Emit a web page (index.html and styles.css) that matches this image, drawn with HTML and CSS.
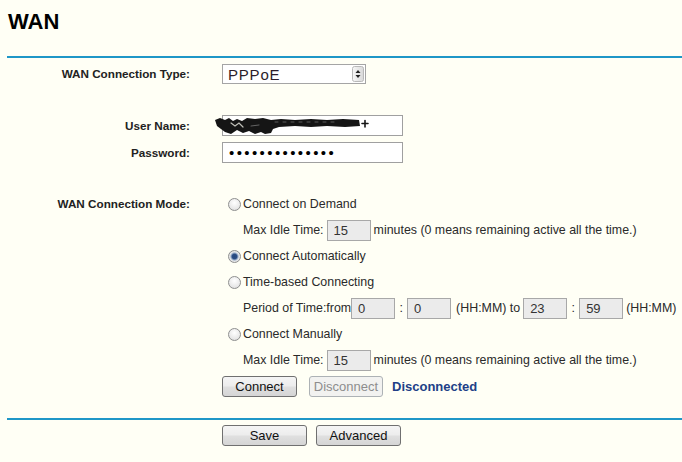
FILE: index.html
```html
<!DOCTYPE html>
<html lang="en">
<head>
    <meta charset="UTF-8">
    <title>WAN</title>
    <link rel="stylesheet" href="styles.css">
</head>
<body>

    <h1 class="page-title">WAN</h1>
    <hr class="rule">

    <form class="wan-form">
        <div class="field field-type">
            <label class="field-label" for="wanType">WAN Connection Type:</label>
            <select id="wanType" class="type-select">
                <option>PPPoE</option>
            </select>
        </div>

        <div class="field field-user">
            <label class="field-label" for="userName">User Name:</label>
            <div class="user-wrap">
                <input type="text" id="userName" class="text-input" value="">
                <!-- account name blacked out in the screenshot -->
                <svg class="scribble" width="154" height="19" viewBox="0 0 154 19">
                    <g fill="#151515">
                        <path d="M0 3 L5 1 L10 3 L14 1 L18 4 L22 2 L27 4 L32 1 L40 2 L48 1 L56 3 L66 2 L80 3 L96 2 L112 3 L128 2 L144 3 L145 9 L130 10 L112 9 L96 10 L80 9 L64 10 L58 12 L56 16 L50 17 L46 15 L40 17 L34 14 L28 16 L22 13 L16 17 L10 15 L6 12 L2 9 Z"/>
                    </g>
                    <g fill="none" stroke-linecap="round">
                        <path d="M16 6 L20 9 L24 6 L28 10" stroke="#e8e8e0" stroke-width="1.2" opacity="0.8"/>
                        <path d="M60 5 L120 5" stroke="#777" stroke-width="1" stroke-dasharray="3 5" opacity="0.7"/>
                        <path d="M36 9 L44 8" stroke="#999" stroke-width="1" opacity="0.6"/>
                        <path d="M147 6.5 L153 6.5 M150 3.5 L150 10" stroke="#151515" stroke-width="1.6"/>
                    </g>
                </svg>
            </div>
        </div>

        <div class="field field-pass">
            <label class="field-label" for="password">Password:</label>
            <input type="password" id="password" class="text-input pass-input" value="abcdefghijklmn">
        </div>

        <div class="field field-mode">
            <span class="field-label">WAN Connection Mode:</span>
            <div class="mode-list">
                <label class="mode-row">
                    <input type="radio" name="mode" class="mode-radio">Connect on Demand
                </label>
                <div class="mode-row mode-sub">
                    Max Idle Time:
                    <input type="text" class="short-input idle-input" value="15" disabled>
                    <span class="after-input">minutes (0 means remaining active all the time.)</span>
                </div>

                <label class="mode-row">
                    <input type="radio" name="mode" class="mode-radio" checked>Connect Automatically
                </label>

                <label class="mode-row">
                    <input type="radio" name="mode" class="mode-radio">Time-based Connecting
                </label>
                <div class="mode-row mode-sub">
                    Period of Time:from
                    <input type="text" class="short-input" value="0" disabled>
                    <span class="sep">:</span>
                    <input type="text" class="short-input" value="0" disabled>
                    <span class="after-input hhmm">(HH:MM) to</span>
                    <input type="text" class="short-input" value="23" disabled>
                    <span class="sep">:</span>
                    <input type="text" class="short-input" value="59" disabled>
                    <span class="after-input">(HH:MM)</span>
                </div>

                <label class="mode-row">
                    <input type="radio" name="mode" class="mode-radio">Connect Manually
                </label>
                <div class="mode-row mode-sub">
                    Max Idle Time:
                    <input type="text" class="short-input idle-input" value="15" disabled>
                    <span class="after-input">minutes (0 means remaining active all the time.)</span>
                </div>

                <div class="mode-row">
                    <button type="button" class="btn btn-connect">Connect</button>
                    <button type="button" class="btn btn-disconnect" disabled>Disconnect</button>
                    <span class="status">Disconnected</span>
                </div>
            </div>
        </div>
    </form>

    <hr class="rule rule-bottom">

    <div class="footer-actions">
        <button type="button" class="btn btn-wide">Save</button>
        <button type="button" class="btn btn-wide">Advanced</button>
    </div>

</body>
</html>
```

FILE: styles.css
```css
body {
    margin: 0;
    background-color: #fffff5;
    font-family: "Liberation Sans", Arial, sans-serif;
    font-size: 12px;
    color: #2a2a2a;
}
.page-title {
    margin: 0;
    padding: 9px 0 0 8px;
    font-size: 22px;
    line-height: 26px;
    font-weight: bold;
    color: #000;
}
.rule {
    height: 2px;
    border: 0;
    background-color: #1f97c7;
    margin: 21px 0 0 7px;
}
.rule-bottom {
    margin-top: 19px;
}
.wan-form {
    margin-top: 3px;
}
.field {
    display: flex;
    align-items: center;
}
.field-label {
    width: 190px;
    flex: none;
    margin-right: 32px;
    text-align: right;
    font-size: 11.7px;
    font-weight: bold;
    line-height: 26px;
    color: #222;
}
.field-type {
    height: 26px;
}
.field-user {
    margin-top: 25px;
    height: 27px;
}
.field-pass {
    height: 27px;
}
.field-mode {
    margin-top: 25px;
    align-items: flex-start;
}

/* select with the little up/down spinner */
.type-select {
    -webkit-appearance: none;
    appearance: none;
    box-sizing: border-box;
    width: 144px;
    height: 20px;
    margin: 0;
    padding: 0 0 0 5px;
    border: 1px solid #a5a5a5;
    border-radius: 0;
    background: #fff url("data:image/svg+xml,%3Csvg xmlns='http://www.w3.org/2000/svg' width='12' height='16'%3E%3Cdefs%3E%3ClinearGradient id='g' x1='0' x2='1'%3E%3Cstop offset='0' stop-color='%23f7f7f7'/%3E%3Cstop offset='1' stop-color='%23d9d9d9'/%3E%3C/linearGradient%3E%3C/defs%3E%3Crect x='0.5' y='0.5' width='11' height='15' rx='2' fill='url(%23g)' stroke='%23b9b9b9'/%3E%3Cpath d='M3.5 7h5l-2.5-3z M3.5 9h5l-2.5 3z' fill='%23222'/%3E%3C/svg%3E") no-repeat right 1px center;
    font-family: "Liberation Sans", Arial, sans-serif;
    font-size: 15px;
    letter-spacing: 0.8px;
    color: #2b1d2a;
}

.text-input {
    box-sizing: border-box;
    width: 181px;
    height: 21px;
    margin: 0;
    padding: 0 6px;
    border: 1px solid #a0a0a0;
    background-color: #fff;
    font-family: "Liberation Sans", Arial, sans-serif;
    font-size: 13px;
}
.pass-input {
    font-size: 15px;
    letter-spacing: 2.4px;
    color: #000;
}
.user-wrap {
    position: relative;
    display: flex;
}
.scribble {
    position: absolute;
    left: -7px;
    top: 2px;
}

.mode-list {
    display: flex;
    flex-direction: column;
    font-size: 12.4px;
}
.mode-row {
    height: 26px;
    display: flex;
    align-items: center;
    white-space: nowrap;
}
.mode-sub {
    padding-left: 21px;
}
.mode-radio {
    -webkit-appearance: none;
    appearance: none;
    box-sizing: border-box;
    width: 13px;
    height: 13px;
    margin: 0 2px 0 6px;
    border: 1px solid #8e8f8f;
    border-radius: 50%;
    background: radial-gradient(circle at 50% 35%, #ffffff, #e6e6e6 70%, #d2d2d2);
}
.mode-radio:checked {
    background: radial-gradient(circle, #24467c 0, #2d4f86 2.4px, #8ea3c2 3.4px, #e9e9e9 4.6px, #d4d4d4);
}
.short-input {
    box-sizing: border-box;
    width: 44px;
    height: 21px;
    margin: 0;
    padding: 0 0 0 6px;
    border: 1px solid #a8a8a8;
    background-color: #ebebeb;
    color: #333;
    font-family: "Liberation Sans", Arial, sans-serif;
    font-size: 13px;
}
.idle-input {
    margin-left: 3px;
}
.sep {
    width: 12px;
    text-align: center;
}
.after-input {
    margin-left: 3px;
}
.hhmm {
    margin: 0 3px 0 5px;
}

.btn {
    box-sizing: border-box;
    height: 21px;
    padding: 0;
    border: 1px solid #707070;
    border-radius: 3px;
    background: linear-gradient(#f5f5f5, #ededed 45%, #dfdfdf 55%, #d5d5d5);
    font-family: "Liberation Sans", Arial, sans-serif;
    font-size: 13px;
    color: #111;
}
.btn-connect {
    width: 75px;
}
.btn-disconnect {
    width: 74px;
    margin-left: 12px;
    border-color: #adb2b5;
    background: #f2f2f0;
    color: #8d8d8d;
}
.status {
    margin-left: 9px;
    font-size: 13px;
    font-weight: bold;
    color: #213f87;
}
.footer-actions {
    display: flex;
    gap: 9px;
    margin: 5px 0 0 222px;
}
.btn-wide {
    width: 85px;
}
```
